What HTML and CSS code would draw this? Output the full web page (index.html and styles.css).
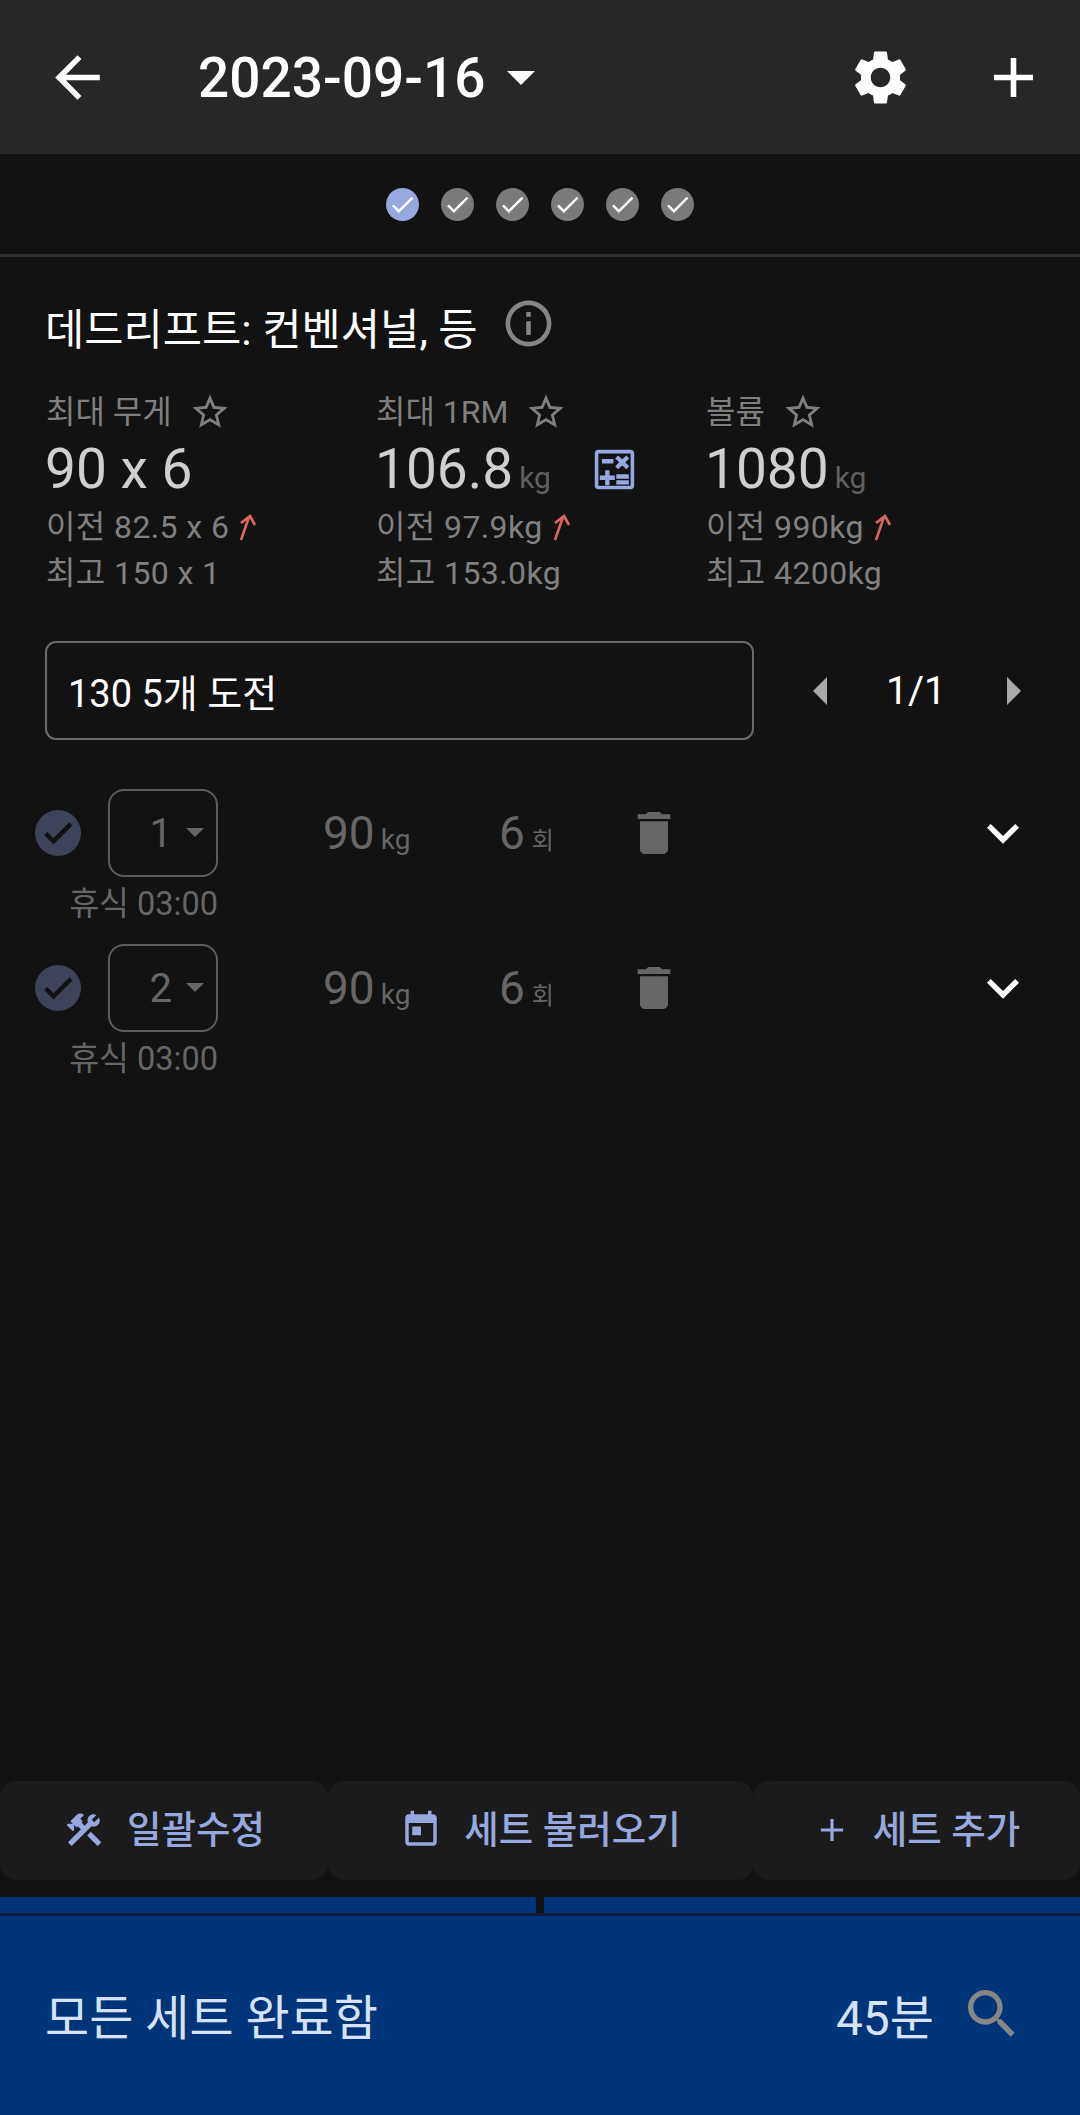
FILE: index.html
```html
<!DOCTYPE html>
<html lang="ko">
<head>
<meta charset="utf-8">
<title>운동 기록</title>
<link rel="stylesheet" href="styles.css">
</head>
<body>
<svg class="sprite" aria-hidden="true">
  <symbol id="i-back" viewBox="0 0 24 24"><path d="M20 11H7.83l5.59-5.59L12 4l-8 8 8 8 1.41-1.41L7.83 13H20v-2z"/></symbol>
  <symbol id="i-gear" viewBox="0 0 24 24"><path d="M19.14 12.94c.04-.3.06-.61.06-.94 0-.32-.02-.64-.07-.94l2.03-1.58c.18-.14.23-.41.12-.61l-1.92-3.32c-.12-.22-.37-.29-.59-.22l-2.39.96c-.5-.38-1.03-.7-1.62-.94l-.36-2.54c-.04-.24-.24-.41-.48-.41h-3.84c-.24 0-.43.17-.47.41l-.36 2.54c-.59.24-1.13.57-1.62.94l-2.39-.96c-.22-.08-.47 0-.59.22L2.74 8.87c-.12.21-.08.47.12.61l2.03 1.58c-.05.3-.09.63-.09.94s.02.64.07.94l-2.03 1.58c-.18.14-.23.41-.12.61l1.92 3.32c.12.22.37.29.59.22l2.39-.96c.5.38 1.03.7 1.62.94l.36 2.54c.05.24.24.41.48.41h3.84c.24 0 .44-.17.47-.41l.36-2.54c.59-.24 1.13-.56 1.62-.94l2.39.96c.22.08.47 0 .59-.22l1.92-3.32c.12-.22.07-.47-.12-.61l-2.01-1.58zM12 15.6c-1.98 0-3.6-1.62-3.6-3.6s1.62-3.6 3.6-3.6 3.6 1.62 3.6 3.6-1.62 3.6-3.6 3.6z"/></symbol>
  <symbol id="i-add" viewBox="0 0 24 24"><path d="M19 13h-6v6h-2v-6H5v-2h6V5h2v6h6v2z"/></symbol>
  <symbol id="i-check" viewBox="0 0 24 24"><path d="M9 16.17 4.83 12l-1.42 1.41L9 19 21 7l-1.41-1.41z"/></symbol>
  <symbol id="i-info" viewBox="0 0 24 24"><path d="M11 7h2v2h-2zm0 4h2v6h-2zm1-9C6.48 2 2 6.48 2 12s4.48 10 10 10 10-4.48 10-10S17.52 2 12 2zm0 18c-4.41 0-8-3.59-8-8s3.59-8 8-8 8 3.59 8 8-3.59 8-8 8z"/></symbol>
  <symbol id="i-star" viewBox="0 0 24 24"><path d="M22 9.24l-7.19-.62L12 2 9.19 8.63 2 9.24l5.46 4.73L5.82 21 12 17.27 18.18 21l-1.63-7.03L22 9.24zM12 15.4l-3.76 2.27 1-4.28-3.32-2.88 4.38-.38L12 6.1l1.71 4.04 4.38.38-3.32 2.88 1 4.28L12 15.4z"/></symbol>
  <symbol id="i-up" viewBox="0 0 20 28"><path d="M3 27 11 4M3 10l9-7 5 9" fill="none" stroke="currentColor" stroke-width="2.6"/></symbol>
  <symbol id="i-calc" viewBox="0 0 24 24"><path fill-rule="evenodd" d="M21 1H3C1.9 1 1 1.9 1 3v18c0 1.1.9 2 2 2h18c1.1 0 2-.9 2-2V3c0-1.100-.9-2-2-2zm0 20H3V3h18v18z"/><path d="M5 6.200h6.400v2.400H5zM13 14.700h7v2.400h-7zM13 18h7v2.400h-7zM6.800 20.800h2.400v-3h3v-2.400h-3v-3H6.800v3h-3v2.400h3zM14 11.800l2.300-2.100 2.300 2.100 1.600-1.600-2.200-2.200 2.200-2.200-1.600-1.600-2.300 2.100-2.300-2.100-1.600 1.600 2.200 2.200-2.200 2.200z"/></symbol>
  <symbol id="i-trash" viewBox="0 0 24 24"><path d="M6 19c0 1.100.9 2 2 2h8c1.100 0 2-.9 2-2V7H6v12zM19 4h-3.500l-1-1h-5l-1 1H5v2h14V4z"/></symbol>
  <symbol id="i-chev" viewBox="0 0 24 24"><path d="M7.410 8.590 12 13.170l4.590-4.580L18 10l-6 6-6-6z"/></symbol>
  <symbol id="i-tools" viewBox="0 0 24 24"><path d="M13.783 15.172l2.121-2.121 5.996 5.996-2.121 2.121zM17.500 10c1.930 0 3.500-1.570 3.500-3.500 0-.58-.16-1.120-.41-1.600l-2.700 2.700-1.490-1.490 2.700-2.700c-.48-.25-1.020-.41-1.600-.41C15.570 3 14 4.570 14 6.500c0 .41.08.8.21 1.160l-1.850 1.850-1.780-1.780.71-.71-1.410-1.410L12 3.490c-1.170-1.170-3.070-1.170-4.240 0L4.220 7.030l1.410 1.410H2.810l-.71.71 3.540 3.540.71-.71V9.150l1.410 1.410.71-.71 1.780 1.780-7.410 7.410 2.120 2.120L16.340 9.790c.36.13.75.21 1.160.21z"/></symbol>
  <symbol id="i-today" viewBox="0 0 24 24"><path d="M19 3h-1V1h-2v2H8V1H6v2H5c-1.110 0-1.990.9-1.990 2L3 19c0 1.100.89 2 2 2h14c1.100 0 2-.9 2-2V5c0-1.100-.9-2-2-2zm0 16H5V8h14v11zM7 10h5v5H7z"/></symbol>
  <symbol id="i-search" viewBox="0 0 24 24"><path d="M15.500 14h-.79l-.28-.27C15.410 12.590 16 11.110 16 9.500 16 5.910 13.090 3 9.500 3S3 5.910 3 9.500 5.910 16 9.500 16c1.610 0 3.090-.59 4.230-1.570l.27.28v.79l5 4.990L20.490 19l-4.990-5zm-6 0C7.010 14 5 11.990 5 9.500S7.010 5 9.500 5 14 7.010 14 9.500 11.990 14 9.500 14z"/></symbol>
</svg>

<div class="app">
  <header class="appbar">
    <svg class="ico bar-back"><use href="#i-back"/></svg>
    <div class="bar-date">2023-09-16</div>
    <span class="bar-caret"></span>
    <svg class="ico bar-gear"><use href="#i-gear"/></svg>
    <svg class="ico bar-add"><use href="#i-add"/></svg>
  </header>

  <nav class="dots">
    <span class="dot dot-on"><svg class="ico"><use href="#i-check"/></svg></span>
    <span class="dot"><svg class="ico"><use href="#i-check"/></svg></span>
    <span class="dot"><svg class="ico"><use href="#i-check"/></svg></span>
    <span class="dot"><svg class="ico"><use href="#i-check"/></svg></span>
    <span class="dot"><svg class="ico"><use href="#i-check"/></svg></span>
    <span class="dot"><svg class="ico"><use href="#i-check"/></svg></span>
  </nav>

  <section class="title-row">
    <h1 class="title">데드리프트: 컨벤셔널, 등</h1>
    <svg class="ico info"><use href="#i-info"/></svg>
  </section>

  <section class="stats">
    <div class="stat">
      <div class="stat-label">최대 무게<svg class="ico star"><use href="#i-star"/></svg></div>
      <div class="stat-value">90 x 6</div>
      <div class="stat-sub">이전 82.5 x 6<svg class="up"><use href="#i-up"/></svg></div>
      <div class="stat-sub">최고 150 x 1</div>
    </div>
    <div class="stat">
      <div class="stat-label">최대 1RM<svg class="ico star"><use href="#i-star"/></svg></div>
      <div class="stat-value">106.8<span class="unit">kg</span><svg class="ico calc"><use href="#i-calc"/></svg></div>
      <div class="stat-sub">이전 97.9kg<svg class="up"><use href="#i-up"/></svg></div>
      <div class="stat-sub">최고 153.0kg</div>
    </div>
    <div class="stat">
      <div class="stat-label">볼륨<svg class="ico star"><use href="#i-star"/></svg></div>
      <div class="stat-value">1080<span class="unit">kg</span></div>
      <div class="stat-sub">이전 990kg<svg class="up"><use href="#i-up"/></svg></div>
      <div class="stat-sub">최고 4200kg</div>
    </div>
  </section>

  <section class="note-row">
    <div class="note">130 5개 도전</div>
    <div class="pager">
      <span class="tri tri-l"></span>
      <span class="pager-num">1/1</span>
      <span class="tri tri-r"></span>
    </div>
  </section>

  <section class="sets">
    <article class="set">
      <div class="set-main">
        <span class="set-check"><svg class="ico"><use href="#i-check"/></svg></span>
        <div class="set-no"><span>1</span><i class="set-caret"></i></div>
        <div class="set-w">90<span class="set-u">kg</span></div>
        <div class="set-r">6<span class="set-u2">회</span></div>
        <svg class="ico trash"><use href="#i-trash"/></svg>
        <svg class="ico chev"><use href="#i-chev"/></svg>
      </div>
      <div class="rest">휴식 03:00</div>
    </article>
    <article class="set">
      <div class="set-main">
        <span class="set-check"><svg class="ico"><use href="#i-check"/></svg></span>
        <div class="set-no"><span>2</span><i class="set-caret"></i></div>
        <div class="set-w">90<span class="set-u">kg</span></div>
        <div class="set-r">6<span class="set-u2">회</span></div>
        <svg class="ico trash"><use href="#i-trash"/></svg>
        <svg class="ico chev"><use href="#i-chev"/></svg>
      </div>
      <div class="rest">휴식 03:00</div>
    </article>
  </section>

  <div class="spacer"></div>

  <section class="actions">
    <button class="act act-a"><svg class="ico"><use href="#i-tools"/></svg>일괄수정</button>
    <button class="act act-b"><svg class="ico"><use href="#i-today"/></svg>세트 불러오기</button>
    <button class="act act-c"><svg class="ico"><use href="#i-add"/></svg>세트 추가</button>
  </section>

  <div class="progress"><span></span><span></span></div>
  <footer class="bottom">
    <div class="bottom-text">모든 세트 완료함</div>
    <div class="bottom-time">45분</div>
    <svg class="ico bottom-search"><use href="#i-search"/></svg>
  </footer>
</div>
</body>
</html>
```

FILE: styles.css
```css
* { box-sizing: border-box; }
html, body { margin: 0; padding: 0; }
body {
  background: #121212;
  font-family: Roboto, "Noto Sans CJK KR", sans-serif;
  color: #fff;
}
.sprite { display: none; }
.ico { display: block; fill: currentColor; flex: none; }
.app { display: flex; flex-direction: column; width: 1080px; height: 2115px; overflow: hidden; }

.appbar { display: flex; align-items: center; height: 154px; background: #272727; flex: none; }
.bar-back { width: 67px; height: 67px; margin-left: 44px; }
.bar-date { margin-left: 87px; margin-top: 2px; font-size: 55px; font-weight: 500; line-height: 60px; }
.bar-caret { width: 0; height: 0; margin-left: 22px; margin-top: 2px; border-left: 14px solid transparent; border-right: 14px solid transparent; border-top: 14px solid #fff; }
.bar-gear { width: 65px; height: 65px; margin-left: auto; margin-right: 67px; }
.bar-add { width: 67px; height: 67px; margin-right: 33px; }

.dots { display: flex; justify-content: center; gap: 22px; align-items: center; height: 103px; border-bottom: 3px solid #2e2e2e; flex: none; }
.dot { display: flex; align-items: center; justify-content: center; width: 33px; height: 33px; border-radius: 50%; background: #7a7a7a; color: #fff; }
.dot-on { background: #97a8de; }
.dot .ico { width: 29px; height: 29px; }

.title-row { display: flex; align-items: center; gap: 23px; margin: 48px 0 0 46px; height: 50px; flex: none; }
.title { margin: 0; font-size: 42.7px; font-weight: 400; line-height: 50px; color: #fff; margin-left: -1px; }
.info { width: 55px; height: 55px; color: #858585; margin-top: -14px; }

.stats { display: grid; grid-template-columns: 330px 330px 330px; margin: 37px 0 0 46px; flex: none; }
.stat { display: flex; flex-direction: column; }
.stat-label { display: flex; align-items: center; font-size: 32px; line-height: 40px; color: #7f7f7f; height: 40px; }
.star { width: 42px; height: 42px; margin-left: 17px; color: #7f7f7f; }
.stat-value { display: flex; align-items: baseline; height: 70px; font-size: 55px; line-height: 70px; color: #cfcfcf; margin-top: 2px; margin-left: -1px; }
.unit { font-size: 30px; color: #606060; margin-left: 6px; }
.calc { width: 43px; height: 43px; color: #97a8de; margin-left: 42px; align-self: center; }
.stat-sub { display: flex; align-items: center; font-size: 32px; letter-spacing: .4px; line-height: 46px; height: 46px; color: #808080; }
.up { width: 20px; height: 28px; margin-left: 9px; color: #dc6561; }

.note-row { display: flex; align-items: center; margin: 45px 0 0 45px; flex: none; }
.note { display: flex; align-items: center; width: 709px; height: 99px; padding-left: 21px; border: 2px solid #6a6a6a; border-radius: 11px; font-size: 38px; color: #fff; }
.pager { display: flex; align-items: center; margin-left: 59px; }
.tri { width: 0; height: 0; border-top: 14px solid transparent; border-bottom: 14px solid transparent; }
.tri-l { border-right: 14px solid #a9a9a9; }
.tri-r { border-left: 14px solid #a9a9a9; }
.pager-num { width: 180px; padding-right: 2px; text-align: center; font-size: 39px; color: #fff; }

.sets { display: flex; flex-direction: column; margin-top: 49px; flex: none; }
.set { height: 155px; display: flex; flex-direction: column; }
.set-main { display: flex; align-items: center; height: 88px; }
.set-check { display: flex; align-items: center; justify-content: center; width: 46px; height: 46px; margin-left: 35px; border-radius: 50%; background: #3d4459; color: #121212; }
.set-check .ico { width: 36px; height: 36px; stroke: currentColor; stroke-width: 1; }
.set-no { display: flex; align-items: center; justify-content: flex-end; width: 110px; height: 88px; margin-left: 27px; padding-right: 12px; border: 2px solid #5c5c5c; border-radius: 16px; font-size: 40px; color: #666; }
.set-caret { width: 0; height: 0; margin-left: 14px; margin-top: -2px; border-left: 9px solid transparent; border-right: 9px solid transparent; border-top: 9px solid #666; }
.set-w { display: flex; align-items: baseline; width: 176px; margin-left: 105px; font-size: 46px; color: #666; }
.set-u { font-size: 28px; margin-left: 6px; }
.set-r { display: flex; align-items: baseline; width: 127px; font-size: 46px; color: #666; }
.set-u2 { font-size: 24px; margin-left: 7px; }
.trash { width: 56px; height: 56px; color: #666; }
.chev { width: 64px; height: 64px; margin-left: 289px; }
.rest { width: 218px; margin-top: 7px; text-align: right; font-size: 32.5px; line-height: 40px; color: #666; }

.spacer { flex: 1; }

.actions { display: grid; grid-template-columns: 328px 425px 327px; height: 99px; flex: none; }
.act { display: flex; align-items: center; justify-content: center; gap: 22px; border: 0; border-radius: 16px; background: #1b1b1b; color: #97a8de; font-family: inherit; font-size: 37.5px; line-height: 44px; padding: 0 0 2px; font-weight: 500; }
.act .ico { width: 42px; height: 42px; }
.act-c .ico { width: 38px; height: 38px; }

.progress { display: grid; grid-template-columns: 536px 536px; justify-content: space-between; height: 16px; margin-top: 17px; flex: none; }
.progress span { background: #003478; }
.bottom { display: flex; align-items: center; height: 202px; flex: none; border-top: 3px solid #0c1d3c; background: #003478; color: #d6e2f5; font-size: 48px; padding: 0 0 4px 45px; }
.bottom-text { margin-right: auto; }
.bottom-search { width: 64px; height: 64px; margin: 0 56px 0 26px; color: #868686; }
```
